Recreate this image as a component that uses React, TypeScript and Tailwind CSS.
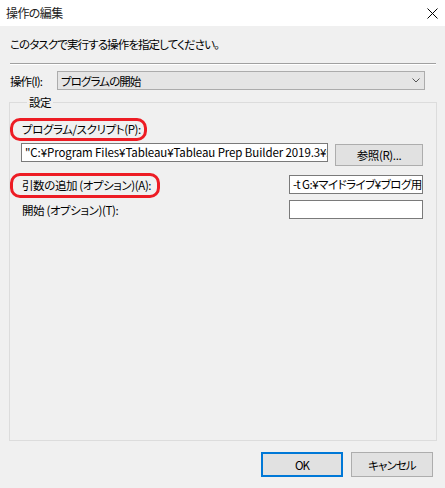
import React from 'react'

const font = "[font-family:'Noto_Sans_CJK_JP','Noto_Sans',sans-serif] [font-feature-settings:'palt'] tracking-[-0.9px]"

function Marker({ w, h, top, left }: { w: string; h: string; top: string; left: string }) {
  return (
    <span
      className={`pointer-events-none absolute rounded-[10px] border-[3px] border-[#ed1c24] ${w} ${h} ${top} ${left}`}
    />
  )
}

function TextBox({ value, className }: { value?: string; className: string }) {
  return (
    <div
      className={`h-[19px] overflow-hidden whitespace-nowrap border border-[#7a7a7a] bg-white pl-[3px] leading-[17px] ${className}`}
    >
      {value}
    </div>
  )
}

export default function App() {
  return (
    <div className={`h-[488px] w-[445px] overflow-hidden bg-[#f0f0f0] text-[11.5px] text-black ${font}`}>
      {/* Title bar */}
      <div className="flex h-[26px] items-center justify-between bg-white pl-[6px] pr-[6px]">
        <span className="text-[12px] leading-[16px] tracking-[-0.6px] text-[#222]">操作の編集</span>
        <svg width="11" height="11" viewBox="0 0 11 11" className="mr-px">
          <path d="M0.5 0.5L10.5 10.5M10.5 0.5L0.5 10.5" stroke="#000" strokeWidth="1" />
        </svg>
      </div>

      <div className="px-[10px]">
        <p className="mt-[10px] leading-[16px]">このタスクで実行する操作を指定してください。</p>

        {/* Separator */}
        <div className="mt-[11px] w-[426px] border-t border-b border-t-[#a0a0a0] border-b-white" />

        {/* Action row */}
        <div className="mt-[6px] flex items-center">
          <span className="w-[47px] leading-[16px]">操作(I):</span>
          <div className="flex h-[19px] w-[368px] items-center justify-between border border-[#acacac] bg-[#e5e5e5] pl-[3px] pr-[4px]">
            <span className="leading-[16px]">プログラムの開始</span>
            <svg width="8" height="5" viewBox="0 0 8 5">
              <path d="M0.5 0.5L4 4L7.5 0.5" fill="none" stroke="#555" strokeWidth="1" />
            </svg>
          </div>
        </div>
      </div>

      {/* Settings group */}
      <fieldset className="ml-[9px] mt-[4px] h-[347px] w-[428px] border border-[#dcdcdc] pl-[12px] pr-[13px] tracking-[-0.4px]">
        <legend className="ml-[5px] px-[2px] leading-[16px]">設定</legend>

        <div className="relative mt-[11px] leading-[16px]">
          プログラム/スクリプト(P):
          <Marker w="w-[137px]" h="h-[23px]" top="-top-[3px]" left="-left-[12px]" />
        </div>

        <div className="mt-[6px] flex items-start justify-between">
          <TextBox
            className="-ml-px w-[307px] tracking-[-0.1px]"
            value={'"C:¥Program Files¥Tableau¥Tableau Prep Builder 2019.3¥scripts¥tableau-prep-cli.bat"'}
          />
          <button className="mt-px h-[22px] w-[88px] border border-[#adadad] bg-[#e1e1e1] leading-[16px]">
            参照(R)...
          </button>
        </div>

        <div className="mt-[9px] flex items-center justify-between">
          <div className="relative leading-[16px]">
            引数の追加 (オプション)(A):
            <Marker w="w-[150px]" h="h-[25px]" top="-top-[4px]" left="-left-[12px]" />
          </div>
          <TextBox className="w-[134px] tracking-[-0.5px]" value="-t G:¥マイドライブ¥ブログ用¥flow.json" />
        </div>

        <div className="mt-[6px] flex items-center justify-between">
          <span className="leading-[16px]">開始 (オプション)(T):</span>
          <TextBox className="w-[134px]" />
        </div>
      </fieldset>

      {/* Buttons */}
      <div className="mt-[11px] flex justify-end gap-[8px] pr-[12px]">
        <button className="h-[25px] w-[82px] border-2 border-[#0078d7] bg-[#e1e1e1] leading-[16px]">OK</button>
        <button className="h-[25px] w-[82px] border border-[#adadad] bg-[#e1e1e1] leading-[16px]">キャンセル</button>
      </div>
    </div>
  )
}
